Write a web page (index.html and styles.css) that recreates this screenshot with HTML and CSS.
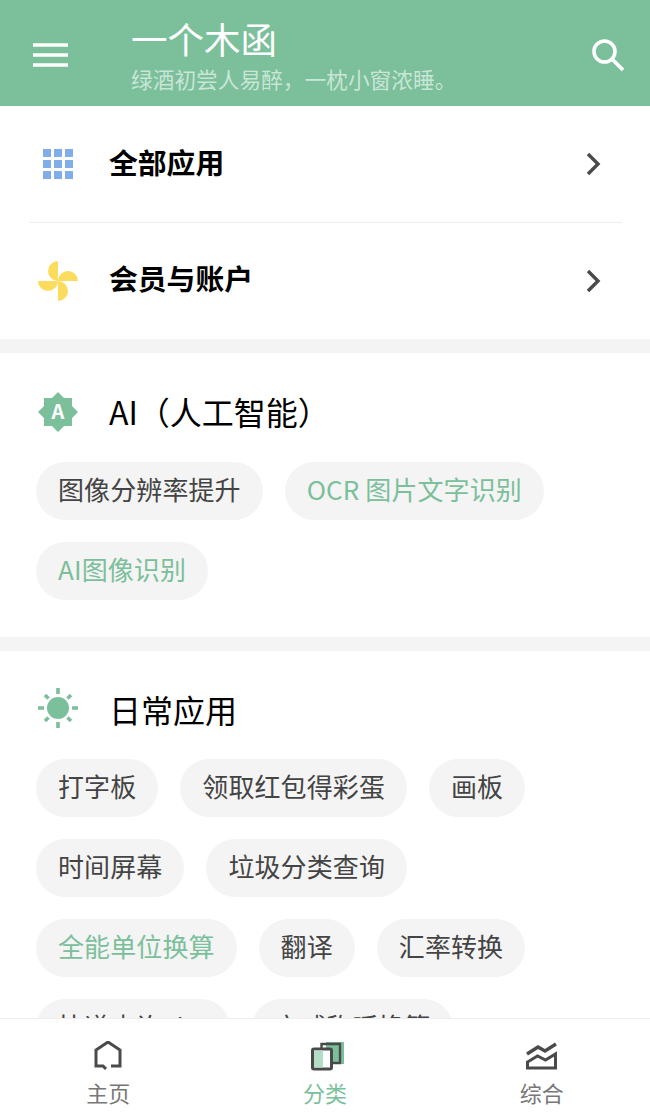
FILE: index.html
```html
<!DOCTYPE html>
<html lang="zh-CN"><head>
<meta charset="utf-8">
<title>一个木函</title>
<meta name="viewport" content="width=device-width, initial-scale=1.0">
<link rel="stylesheet" href="styles.css">
</head>
<body>
<div class="app">

  <div class="top">
    <svg class="menu" width="36" height="24" viewBox="0 0 36 24"><path d="M0 2h35M0 12h35M0 22h35" stroke="#fff" stroke-width="3.4" fill="none"/></svg>
    <div class="brand">
      <div class="brand-name">一个木函</div>
      <div class="brand-sub">绿酒初尝人易醉，一枕小窗浓睡。</div>
    </div>
    <svg class="search" width="34" height="34" viewBox="0 0 34 34"><circle cx="13.5" cy="13.5" r="10.5" stroke="#fff" stroke-width="3.6" fill="none"/><path d="M21 21l11 11" stroke="#fff" stroke-width="3.8" fill="none"/></svg>
  </div>

  <div class="main">
    <div class="block">
      <div class="row">
        <svg class="ico" width="44" height="44" viewBox="0 0 44 44"><g fill="#80aeea"><rect x="7" y="7" width="8" height="8"/><rect x="18" y="7" width="8" height="8"/><rect x="29" y="7" width="8" height="8"/><rect x="7" y="18" width="8" height="8"/><rect x="18" y="18" width="8" height="8"/><rect x="29" y="18" width="8" height="8"/><rect x="7" y="29" width="8" height="8"/><rect x="18" y="29" width="8" height="8"/><rect x="29" y="29" width="8" height="8"/></g></svg>
        <span class="row-name">全部应用</span>
        <svg class="arrow" width="16" height="24" viewBox="0 0 16 24"><path d="M3 2l10 10L3 22" stroke="#4a4a4a" stroke-width="3.4" fill="none"/></svg>
      </div>
      <div class="row row-line">
        <svg class="ico" width="44" height="44" viewBox="0 0 44 44"><g fill="#fbdc5c"><path d="M22 22V2A10 10 0 0 0 22 22z"/><path d="M22 22H42A10 10 0 0 0 22 22z"/><path d="M22 22V42A10 10 0 0 0 22 22z"/><path d="M22 22H2A10 10 0 0 0 22 22z"/></g></svg>
        <span class="row-name">会员与账户</span>
        <svg class="arrow" width="16" height="24" viewBox="0 0 16 24"><path d="M3 2l10 10L3 22" stroke="#4a4a4a" stroke-width="3.4" fill="none"/></svg>
      </div>
    </div>

    <div class="block sec">
      <div class="sec-head">
        <svg class="ico" width="44" height="44" viewBox="0 0 44 44"><path fill="#7bbf9b" d="M22 2l6 6h8v8l6 6-6 6v8h-8l-6 6-6-6H8v-8l-6-6 6-6V8h8z"/><text class="ico-a" x="22" y="29" text-anchor="middle">A</text></svg>
        <span class="sec-name">AI（人工智能）</span>
      </div>
      <div class="chips">
        <span class="chip">图像分辨率提升</span>
        <span class="chip on">OCR 图片文字识别</span>
        <span class="chip on">AI图像识别</span>
      </div>
    </div>

    <div class="block sec sec-daily">
      <div class="sec-head">
        <svg class="ico" width="44" height="44" viewBox="0 0 44 44"><circle cx="22" cy="22" r="11" fill="#7bbf9b"/><path d="M22 2v6M22 36v6M2 22h6M36 22h6M9 9l3.500 3.500M31.500 31.500l3.500 3.500M35 9l-3.500 3.500M12.500 31.500l-3.500 3.500" stroke="#7bbf9b" stroke-width="3.600" fill="none"/></svg>
        <span class="sec-name">日常应用</span>
      </div>
      <div class="chips">
        <span class="chip">打字板</span>
        <span class="chip">领取红包得彩蛋</span>
        <span class="chip">画板</span>
        <span class="chip">时间屏幕</span>
        <span class="chip">垃圾分类查询</span>
        <span class="chip on">全能单位换算</span>
        <span class="chip">翻译</span>
        <span class="chip">汇率转换</span>
        <span class="chip">快递查询Lite</span>
        <span class="chip">亲戚称呼换算</span>
      </div>
    </div>
  </div>

  <div class="tabs">
    <div class="tab">
      <svg width="30" height="30" viewBox="0 0 30 30"><path d="M13 28l-3-3H3V9l12-8 12 8v16h-9" stroke="#4a4a4a" stroke-width="3" fill="none"/></svg>
      <span>主页</span>
    </div>
    <div class="tab cur">
      <svg width="38" height="30" viewBox="0 0 38 30"><rect x="20" y="1" width="18" height="22" fill="#7bbf9b"/><path d="M15.500 8V3H34v19h-8" stroke="#4a4a4a" stroke-width="2.400" fill="none"/><rect x="6.500" y="8" width="19" height="20" rx="1.500" fill="#fff" stroke="#4a4a4a" stroke-width="3"/><rect x="8" y="9.500" width="9" height="17" fill="#b5dcc7"/></svg>
      <span>分类</span>
    </div>
    <div class="tab">
      <svg width="34" height="30" viewBox="0 0 34 30"><path d="M2 13l11-7 7 4 11-7" stroke="#4a4a4a" stroke-width="3.400" fill="none"/><path d="M2.500 27v-6l10-6 8 4 10-6v14z" stroke="#4a4a4a" stroke-width="3" fill="none"/></svg>
      <span>综合</span>
    </div>
  </div>

</div>
</body>
</html>
```

FILE: styles.css
```css
*,*::before,*::after {box-sizing: border-box;}
body {
  margin: 0;
  font-family: "Noto Sans CJK SC", sans-serif;
  background: #fff;
}
.app {
  display: flex;
  flex-direction: column;
  height: 1119px;
  overflow: hidden;
}

.top {
  display: flex;
  align-items: center;
  height: 106px;
  flex: none;
  padding: 0 25px 0 33px;
  background: #7bbf9b;
  color: #fff;
}
.menu {margin-top: 4px;}
.brand {
  flex: 1;
  margin-left: 62px;
  padding-top: 6px;
}
.brand-name {
  font-size: 36.500px;
  line-height: 42px;
}
.brand-sub {
  margin-top: 3px;
  font-size: 21.700px;
  line-height: 32px;
  color: rgba(255,255,255,0.6);
}
.search {margin-top: 4px;}

.main {
  flex: 1;
  overflow: hidden;
  background: #f4f4f4;
}
.block {
  background: #fff;
  margin-bottom: 14px;
}

.row {
  display: flex;
  align-items: center;
  height: 116px;
  padding: 0 49px 0 36px;
}
.row-line {
  position: relative;
  height: 117px;
}
.row-line::before {
  content: "";
  position: absolute;
  left: 29px;
  right: 28px;
  top: 0;
  height: 1px;
  background: #eee;
}
.row-name {
  flex: 1;
  margin-left: 29px;
  margin-bottom: 5px;
  font-size: 28.800px;
  font-weight: 700;
  line-height: 36px;
  color: #000;
}

.sec {padding: 37px 36px;}
.sec-head {
  display: flex;
  align-items: center;
  height: 44px;
}
.sec-daily .ico {margin-bottom: 4px;}
.ico-a {
  font-size: 20px;
  font-weight: 700;
  fill: #fff;
}
.sec-name {
  margin-left: 29px;
  font-size: 32px;
  line-height: 40px;
  margin-top: -2px;
  color: #000;
}
.chips {
  display: flex;
  flex-wrap: wrap;
  gap: 22px;
  margin-top: 28px;
}
.sec-daily .chips {margin-top: 27px;}
.chip {
  height: 58px;
  padding: 0 22px;
  border-radius: 29px;
  background: #f4f4f4;
  font-size: 26px;
  letter-spacing: 0.1px;
  line-height: 54px;
  color: #444;
}
.chip.on {color: #7bbf9b;}

.tabs {
  display: flex;
  flex: none;
  height: 101px;
  padding-top: 22px;
  background: #fff;
  border-top: 1px solid #eee;
}
.tab {
  flex: 1;
  display: flex;
  flex-direction: column;
  align-items: center;
  font-size: 22px;
  color: #777;
}
.tab span {
  margin-top: 6px;
  line-height: 30px;
}
.tab.cur {color: #7bbf9b;}
```
